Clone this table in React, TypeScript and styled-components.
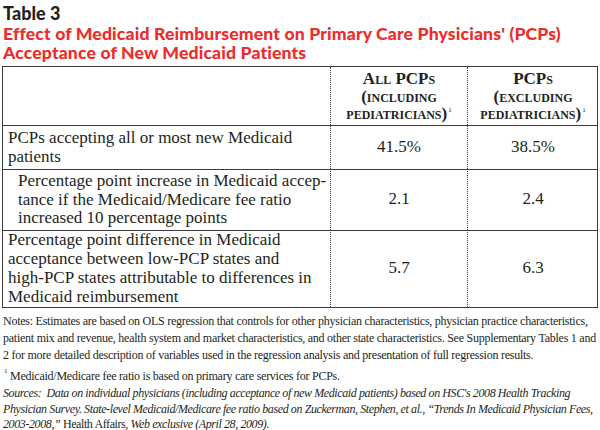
import React from "react";
import styled, { createGlobalStyle } from "styled-components";

const Global = createGlobalStyle`
  html, body { margin: 0; padding: 0; background: #fff; }
  body { width: 600px; height: 430px; overflow: hidden; }
`;

const Page = styled.div`
  padding: 3px 2px 0 2px;
  width: 600px;
  box-sizing: border-box;
`;

const TableLabel = styled.div`
  font-family: Lato, "Open Sans", sans-serif;
  font-weight: 900;
  font-size: 18px;
  line-height: 20px;
  color: #231f20;
  padding-left: 1px;
`;

const Title = styled.div`
  font-family: Lato, "Open Sans", sans-serif;
  font-weight: 900;
  font-size: 17.6px;
  line-height: 18.5px;
  letter-spacing: 0.15px;
  color: #ec2d2b;
  margin-top: 2px;
  padding-left: 1px;
`;

const Line = styled.span`
  display: block;
  white-space: nowrap;
`;

const Table = styled.div`
  margin-top: 4px;
  display: grid;
  grid-template-columns: 327px 137px 131px;
  grid-template-rows: 58px 44px 61px 77px;
  border: 1px solid #3c3c3c;
  width: 596px;
  box-sizing: border-box;
  font-family: "Liberation Serif", serif;
  color: #231f20;
`;

const Cell = styled.div<{ $row: number; $col: number }>`
  box-sizing: border-box;
  overflow: hidden;
  border-top: ${(p) => (p.$row > 0 ? "1px solid #3c3c3c" : "none")};
  border-left: ${(p) => (p.$col > 0 ? "1px dotted #3c3c3c" : "none")};
`;

const LabelCell = styled(Cell)<{ $indent?: boolean }>`
  display: flex;
  flex-direction: column;
  justify-content: center;
  font-size: 17px;
  line-height: 18.8px;
  padding: 0 4px 0 ${(p) => (p.$indent ? "15px" : "5px")};
`;

const ValueCell = styled(Cell)`
  display: flex;
  align-items: center;
  justify-content: center;
  font-size: 17px;
  padding-bottom: 2px;
`;

const HeadCell = styled(Cell)`
  display: flex;
  align-items: center;
  justify-content: center;
  text-align: center;
  font-weight: bold;
  font-variant: small-caps;
  font-size: 17px;
  line-height: 17.5px;
  padding-top: 1px;
`;

const Sup = styled.sup`
  font-size: 7px;
  vertical-align: 7px;
  line-height: 0;
  margin-left: 1px;
  font-weight: normal;
`;

const Notes = styled.div`
  margin-top: 5px;
  font-family: "Liberation Serif", serif;
  font-size: 12px;
  letter-spacing: -0.25px;
  color: #231f20;
  padding-left: 1px;
`;

const Para = styled.div<{ $gap: number }>`
  margin: 0 0 ${(p) => p.$gap}px 0;
  line-height: 17px;
`;

const SourcePara = styled.div`
  margin: 0;
  line-height: 15.5px;
  font-style: italic;
  letter-spacing: -0.4px;
`;

const Roman = styled.span`
  font-style: normal;
`;

export default function App() {
  return (
    <>
      <Global />
      <Page>
        <TableLabel>Table 3</TableLabel>
        <Title>
          <Line>Effect of Medicaid Reimbursement on Primary Care Physicians' (PCPs)</Line>
          <Line>Acceptance of New Medicaid Patients</Line>
        </Title>
        <Table>
          <Cell $row={0} $col={0} />
          <HeadCell $row={0} $col={1}>
            <div>
              <Line>All PCPs</Line>
              <Line>(including</Line>
              <Line>
                pediatricians)<Sup>1</Sup>
              </Line>
            </div>
          </HeadCell>
          <HeadCell $row={0} $col={2}>
            <div>
              <Line>PCPs</Line>
              <Line>(excluding</Line>
              <Line>
                pediatricians)<Sup>1</Sup>
              </Line>
            </div>
          </HeadCell>

          <LabelCell $row={1} $col={0}>
            <Line>PCPs accepting all or most new Medicaid</Line>
            <Line>patients</Line>
          </LabelCell>
          <ValueCell $row={1} $col={1}>41.5%</ValueCell>
          <ValueCell $row={1} $col={2}>38.5%</ValueCell>

          <LabelCell $row={2} $col={0} $indent>
            <Line>Percentage point increase in Medicaid accep-</Line>
            <Line>tance if the Medicaid/Medicare fee ratio</Line>
            <Line>increased 10 percentage points</Line>
          </LabelCell>
          <ValueCell $row={2} $col={1}>2.1</ValueCell>
          <ValueCell $row={2} $col={2}>2.4</ValueCell>

          <LabelCell $row={3} $col={0}>
            <Line>Percentage point difference in Medicaid</Line>
            <Line>acceptance between low-PCP states and</Line>
            <Line>high-PCP states attributable to differences in</Line>
            <Line>Medicaid reimbursement</Line>
          </LabelCell>
          <ValueCell $row={3} $col={1}>5.7</ValueCell>
          <ValueCell $row={3} $col={2}>6.3</ValueCell>
        </Table>
        <Notes>
          <Para $gap={4}>
            <Line>
              Notes: Estimates are based on OLS regression that controls for other
              physician characteristics, physician practice characteristics,
            </Line>
            <Line>
              patient mix and revenue, health system and market characteristics,
              and other state characteristics. See Supplementary Tables 1 and
            </Line>
            <Line>
              2 for more detailed description of variables used in the regression
              analysis and presentation of full regression results.
            </Line>
          </Para>
          <Para $gap={1}>
            <Sup>1</Sup> Medicaid/Medicare fee ratio is based on primary care
            services for PCPs.
          </Para>
          <SourcePara>
            <Line>
              Sources:&nbsp; Data on individual physicians (including acceptance
              of new Medicaid patients) based on HSC's 2008 Health Tracking
            </Line>
            <Line>
              Physician Survey. State-level Medicaid/Medicare fee ratio based on
              Zuckerman, Stephen, et al., “Trends In Medicaid Physician Fees,
            </Line>
            <Line>
              2003-2008,” <Roman>Health Affairs,</Roman> Web exclusive (April 28,
              2009).
            </Line>
          </SourcePara>
        </Notes>
      </Page>
    </>
  );
}
